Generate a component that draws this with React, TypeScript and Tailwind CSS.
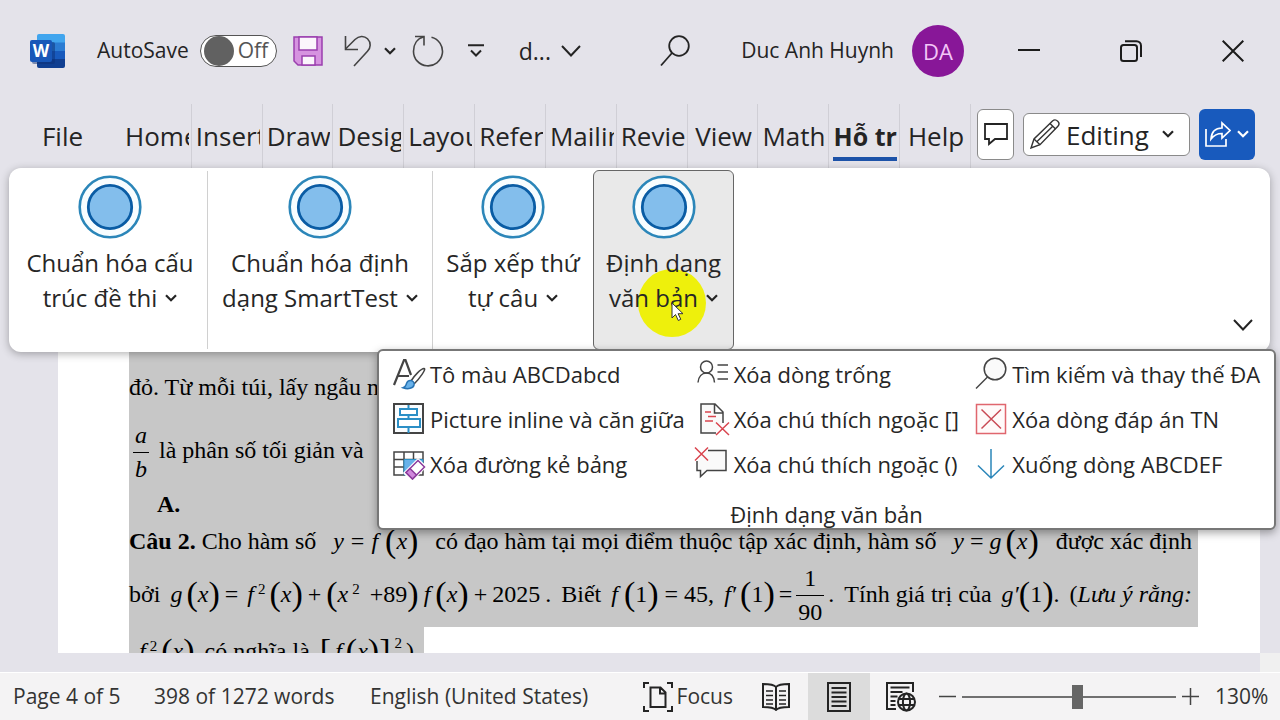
import type { ReactNode } from "react";
import { clsx } from "clsx";

const TABS = [
  { label: "Home" },
  { label: "Insert" },
  { label: "Draw" },
  { label: "Design" },
  { label: "Layout" },
  { label: "Refer" },
  { label: "Mailin" },
  { label: "Revie" },
  { label: "View", fits: true },
  { label: "Math" },
  { label: "Hỗ tr", active: true },
  { label: "Help", fits: true },
];

function Chevron({ className }: { className?: string }) {
  return (
    <svg viewBox="0 0 12 8" className={clsx("h-2 w-3 shrink-0", className)} fill="none" stroke="#242424" strokeWidth="2.2">
      <path d="M1 1.2 6 6.2 11 1.2" />
    </svg>
  );
}

function WideChevron() {
  return (
    <svg viewBox="0 0 20 12" className="h-3 w-5 shrink-0" fill="none" stroke="#242424" strokeWidth="2">
      <path d="M1 1 10 10.5 19 1" />
    </svg>
  );
}

function WordLogo() {
  return (
    <div className="relative h-9 w-9 shrink-0">
      <svg viewBox="0 0 36 36" className="h-9 w-9">
        <path d="M9 1h24a2 2 0 0 1 2 2v7H7V3a2 2 0 0 1 2-2Z" fill="#41a5ee" />
        <path d="M7 9.500h28v9H7Z" fill="#2b7cd3" />
        <path d="M7 18h28v8H7Z" fill="#185abd" />
        <path d="M7 26h28v7a2 2 0 0 1-2 2H9a2 2 0 0 1-2-2Z" fill="#103f91" />
        <rect x="2" y="9" width="23" height="22" rx="2" fill="#0b2f75" opacity=".5" />
        <rect x="0" y="7" width="22" height="22" rx="2" fill="#1857b8" />
      </svg>
      <span className="absolute top-[7px] left-0 w-[22px] text-center text-[17px] leading-[22px] font-bold text-white">W</span>
    </div>
  );
}

function SaveIcon() {
  return (
    <svg viewBox="0 0 30 30" className="h-[30px] w-[30px]" stroke="#9a3fae" strokeWidth="1.500">
      <path d="M1 1h28v28H5l-4-4Z" fill="#d693e0" />
      <path d="M6 1h18v13H6Z" fill="#fbf5fc" />
      <path d="M9 29v-9h13v9Z" fill="#fbf5fc" />
    </svg>
  );
}

function UndoIcon() {
  return (
    <svg viewBox="0 0 28 32" className="h-8 w-7" fill="none" stroke="#444" strokeWidth="1.600">
      <path d="M1.500 1v13.500H14" />
      <path d="M1.500 14 11 4.500C15 .8 20 .4 23.500 3.800c3.800 3.800 3.300 9 0 12.500L10 31" />
    </svg>
  );
}

function RedoIcon() {
  return (
    <svg viewBox="0 0 32 32" className="h-8 w-8" fill="none" stroke="#444" strokeWidth="1.600">
      <path d="M3 1.500h9v9" />
      <path d="M12 1.800C5 3.500 1.500 9.500 1.500 16.300a14.500 14.500 0 1 0 18-14" />
    </svg>
  );
}

function PencilIcon() {
  return (
    <svg viewBox="0 0 30 30" className="h-[30px] w-[30px]" fill="none" stroke="#333" strokeWidth="1.400">
      <path d="M1 29 4 20 22.500 2c2-1.800 4-1 5.200.2 1.400 1.400 1.900 3.300.2 5.100L10 25.700Z" />
      <path d="m4 20 6 5.700M20 4.500l5.600 5.400M6.800 22.800 23 7" />
    </svg>
  );
}

function ShareIcon() {
  return (
    <svg viewBox="0 0 26 28" className="h-7 w-[26px]" fill="none" stroke="#fff" strokeWidth="1.700">
      <path d="M1 9v17h20v-7" />
      <path d="M6 19c.5-7 4-11 11-11V3l8 7.500-8 7.500v-4.500c-5 0-8 1.500-11 5.500Z" />
    </svg>
  );
}

function RingIcon() {
  return (
    <svg viewBox="0 0 64 64" className="h-16 w-16">
      <circle cx="32" cy="32" r="30.300" fill="#f8fdff" stroke="#2b86b9" strokeWidth="2.600" />
      <circle cx="32" cy="32" r="21.700" fill="#83beec" stroke="#0a5ca4" strokeWidth="2.800" />
    </svg>
  );
}

function IconBox({ children }: { children: ReactNode }) {
  return (
    <svg viewBox="0 0 32 32" className="h-8 w-8 shrink-0 overflow-visible" fill="none" stroke="#444" strokeWidth="1.500">
      {children}
    </svg>
  );
}

const MENU: { label: string; icon: ReactNode }[] = [
  {
    label: "Tô màu ABCDabcd",
    icon: (
      <IconBox>
        <path d="M1 27 11 2h1.500L18 17M5 18h11" strokeWidth="2.200" />
        <path d="M18 23C21 18 28 10.500 31 10.500S26 21 21.500 25.500Z" fill="#fff" />
        <path d="M17.500 22.500c2.500.2 4 2 3.500 4.500-.8 3.500-6 4.500-11 2.800 3-1 2.800-2.500 3.600-4.500.7-1.700 2-2.900 3.900-2.800Z" fill="#69b2ea" stroke="#2874b5" />
      </IconBox>
    ),
  },
  {
    label: "Xóa dòng trống",
    icon: (
      <IconBox>
        <circle cx="9.500" cy="9" r="6" />
        <path d="M1 24.500c.5-6 4-9.500 8.500-9.500s7.500 3.500 8 9.500M20.500 7h10.500M20.500 14h10.500M20.500 21h10.500" />
      </IconBox>
    ),
  },
  {
    label: "Tìm kiếm và thay thế ĐA",
    icon: (
      <IconBox>
        <circle cx="20" cy="11" r="10.800" fill="#fafafa" />
        <path d="M12.500 19 1 30.500" />
      </IconBox>
    ),
  },
  {
    label: "Picture inline và căn giữa",
    icon: (
      <IconBox>
        <rect x="1" y="1" width="29" height="29" fill="#fafdff" strokeWidth="2" />
        <path d="M15.500 2v28" stroke="#2b8fc6" strokeWidth="2" />
        <rect x="7" y="6" width="17" height="6" fill="#fff" stroke="#2b8fc6" strokeWidth="2" />
        <rect x="5" y="16" width="22" height="8" fill="#fff" stroke="#2b8fc6" strokeWidth="2" />
      </IconBox>
    ),
  },
  {
    label: "Xóa chú thích ngoặc []",
    icon: (
      <IconBox>
        <path d="M19 30H4V1h14l8 8v11M17.500 1v9H26" fill="#fafafa" />
        <path d="M8 9h6M11 13.500h8M8 18h8M19 19.500 32 32M32 19.500 19 32" stroke="#d9454f" />
      </IconBox>
    ),
  },
  {
    label: "Xóa dòng đáp án TN",
    icon: (
      <IconBox>
        <rect x="1.500" y="1.500" width="29" height="29" fill="#fffafa" stroke="#e0666e" />
        <path d="M6.500 6.500 26 25.500M26 6.500 6.500 25.500" stroke="#c94a55" />
      </IconBox>
    ),
  },
  {
    label: "Xóa đường kẻ bảng",
    icon: (
      <IconBox>
        <path d="M1 4h29v23H1ZM1 11.500h29M1 19h29M11 4v23M20.500 4v23" />
        <path d="M11 11.500h19V19L20 27h-9Z" fill="#69b2ea" stroke="#2b8fc6" strokeWidth="1" />
        <path d="m12 25 13-13 7 6.500L19 32Z" fill="#fff" stroke="#fff" strokeWidth="3" />
        <path d="m13 24.500 12-12 6.500 6.500-12 12Z" fill="#fff" stroke="#8c3b9c" />
        <path d="m13 24.500 4-4 6.500 6.500-4 4Z" fill="#d087dc" stroke="#8c3b9c" />
      </IconBox>
    ),
  },
  {
    label: "Xóa chú thích ngoặc ()",
    icon: (
      <IconBox>
        <path d="M11 2.500h18v20H10l-6.500 6v-6H0V13" fill="#fafafa" />
        <path d="M-2-.5 11 12.500M11-.5-2 12.500" stroke="#d9454f" />
      </IconBox>
    ),
  },
  {
    label: "Xuống dòng ABCDEF",
    icon: (
      <IconBox>
        <path d="M16 1v29M3 17.500 16 30l13-12.500" stroke="#2b86b9" />
      </IconBox>
    ),
  },
];

function RibbonButton({ lines, className, children }: { lines: [string, string]; className?: string; children?: ReactNode }) {
  return (
    <button type="button" className={clsx("relative flex shrink-0 flex-col items-center text-[24px] leading-[35px] text-[#262626]", className)}>
      <RingIcon />
      {children}
      <span className="relative mt-1.5 whitespace-nowrap">{lines[0]}</span>
      <span className="relative flex items-center gap-2 whitespace-nowrap">
        {lines[1]}
        <Chevron />
      </span>
    </button>
  );
}

/** Tall bracket around a math expression. */
function Tall({ children }: { children: string }) {
  return <span className="text-[34px] leading-none">{children}</span>;
}

function Paren({ children }: { children: ReactNode }) {
  return (
    <span className="flex items-center">
      <Tall>(</Tall>
      {children}
      <Tall>)</Tall>
    </span>
  );
}

function Sup({ children }: { children: string }) {
  return <sup className="-top-2 mx-1 text-[15px] leading-none not-italic">{children}</sup>;
}

function Fraction({ top, bottom }: { top: ReactNode; bottom: ReactNode }) {
  return (
    <span className="flex flex-col items-center pt-1 text-center leading-[33px]">
      <span>{top}</span>
      <span className="h-px w-full bg-black" />
      <span className="px-0.5">{bottom}</span>
    </span>
  );
}

function TitleBar() {
  return (
    <header className="flex h-26 items-center pr-9 pb-0.5 pl-[30px] text-[21px] text-[#242424]">
      <WordLogo />
      <label className="ml-[31px] flex items-center gap-[11px]">
        AutoSave
        <input type="checkbox" className="peer sr-only" />
        <span className="flex h-8 w-[77px] items-center gap-1 rounded-full border border-[#555] bg-white pl-[3px] text-[#555]">
          <span className="h-[30px] w-[30px] rounded-full bg-[#616161]" />
          Off
        </span>
      </label>
      <button type="button" aria-label="Save" className="ml-4">
        <SaveIcon />
      </button>
      <button type="button" aria-label="Undo" className="ml-[21px]">
        <UndoIcon />
      </button>
      <button type="button" aria-label="Undo history" className="ml-3">
        <Chevron />
      </button>
      <button type="button" aria-label="Redo" className="ml-4">
        <RedoIcon />
      </button>
      <button type="button" aria-label="Customize toolbar" className="ml-6">
        <svg viewBox="0 0 16 14" className="h-3.5 w-4" fill="none" stroke="#242424" strokeWidth="2">
          <path d="M0 1.200h16M3 6.500 8 11.500 13 6.500" />
        </svg>
      </button>
      <button type="button" className="ml-[35px] flex items-center gap-2.5 text-[23px]">
        d...
        <WideChevron />
      </button>
      <button type="button" aria-label="Search" className="ml-auto">
        <svg viewBox="0 0 30 32" className="h-8 w-[30px]" fill="none" stroke="#242424" strokeWidth="1.800">
          <circle cx="19" cy="11" r="9.800" />
          <path d="M12 18 1 30.500" />
        </svg>
      </button>
      <button type="button" className="ml-[51px] flex items-center gap-[18px]">
        Duc Anh Huynh
        <span className="flex h-[52px] w-[52px] items-center justify-center rounded-full bg-[#881798] text-[22px] text-[#f3c6f7]">DA</span>
      </button>
      <button type="button" aria-label="Minimize" className="ml-[54px]">
        <svg viewBox="0 0 22 22" className="h-[22px] w-[22px]" stroke="#1c1c1c" strokeWidth="2">
          <path d="M0 10h22" />
        </svg>
      </button>
      <button type="button" aria-label="Restore" className="ml-20">
        <svg viewBox="0 0 22 22" className="h-[22px] w-[22px]" fill="none" stroke="#1c1c1c" strokeWidth="2">
          <rect x="1" y="5" width="16" height="16" rx="2.500" />
          <path d="M5 1.200h11.500A4.500 4.500 0 0 1 21 5.700V17" />
        </svg>
      </button>
      <button type="button" aria-label="Close" className="ml-20">
        <svg viewBox="0 0 22 22" className="h-[22px] w-[22px]" stroke="#1c1c1c" strokeWidth="2">
          <path d="m.7.700 20.600 20.600M21.300.700.700 21.300" />
        </svg>
      </button>
    </header>
  );
}

function TabBar() {
  return (
    <nav className="flex h-16 text-[26px] text-[#242424]">
      <button type="button" className="w-[121px] shrink-0 pl-1">
        File
      </button>
      <div className="flex min-w-0 flex-1">
        {TABS.map((tab) => (
          <button
            key={tab.label}
            type="button"
            className={clsx("flex min-w-0 flex-1 basis-0 items-center border-r border-[#d0cfd6] pr-0.5 pl-1", tab.fits && "justify-center")}
          >
            <span
              className={clsx(
                "overflow-hidden border-b-4 pt-1 leading-[42px] whitespace-nowrap",
                tab.active ? "w-full border-[#1c52a8] text-[25px] font-bold" : "border-transparent"
              )}
            >
              {tab.label}
            </span>
          </button>
        ))}
      </div>
      <div className="mr-[25px] ml-1.5 flex shrink-0 items-center gap-[9px] pb-1">
        <button type="button" aria-label="Comments" className="flex h-[51px] w-[37px] items-center justify-center rounded-md border border-[#8a8a8a] bg-white">
          <svg viewBox="0 0 24 24" className="h-6 w-6" fill="none" stroke="#242424" strokeWidth="1.800">
            <path d="M1 2h22v15H11l-6 5v-5H1Z" />
          </svg>
        </button>
        <label className="relative flex h-[43px] items-center rounded-md border border-[#8a8a8a] bg-white pl-1.5">
          <PencilIcon />
          <select aria-label="Mode" className="w-[129px] appearance-none bg-transparent pt-0.5 pl-1.5">
            <option>Editing</option>
          </select>
          <Chevron className="pointer-events-none absolute right-[15px]" />
        </label>
        <button type="button" aria-label="Share" className="flex h-[51px] w-14 items-center justify-center gap-1.5 rounded-md bg-[#185abd]">
          <ShareIcon />
          <svg viewBox="0 0 12 8" className="h-2 w-3" fill="none" stroke="#fff" strokeWidth="2.200">
            <path d="M1 1.200 6 6.200 11 1.200" />
          </svg>
        </button>
      </div>
    </nav>
  );
}

function Ribbon() {
  return (
    <section className="relative z-10 mr-2.5 ml-[9px] flex h-46 rounded-xl bg-white py-[3px] shadow-[0_2px_8px_rgba(0,0,0,0.3)]">
      <RibbonButton lines={["Chuẩn hóa cấu", "trúc đề thi"]} className="w-[199px] border-r border-[#d0d0d0] pt-1 pl-1" />
      <RibbonButton lines={["Chuẩn hóa định", "dạng SmartTest"]} className="w-[225px] border-r border-[#d0d0d0] pt-1" />
      <RibbonButton lines={["Sắp xếp thứ", "tự câu"]} className="w-40 pt-1" />
      <RibbonButton lines={["Định dạng", "văn bản"]} className="-my-px w-[141px] rounded-md border border-[#666] bg-[#e9e9e9] pt-1">
        <span className="absolute top-[98px] left-11 h-[68px] w-[68px] rounded-full bg-[#eef00c]" />
        <svg viewBox="0 0 14 20" className="absolute top-[131px] left-[77px] z-10 h-5 w-3.5">
          <path d="M1 1v15l3.500-3.500 2.800 6 2.500-1.200-2.700-5.600H12Z" fill="#fff" stroke="#333" strokeWidth="1" />
        </svg>
      </RibbonButton>
      <button type="button" aria-label="Ribbon display options" className="mr-[17px] mb-[18px] ml-auto self-end">
        <WideChevron />
      </button>

      <div role="menu" className="absolute top-[181px] -right-1.5 left-92 flex h-[181px] flex-col rounded-md border-2 border-[#777] bg-white text-[22px] text-[#262626] shadow-[0_3px_8px_rgba(0,0,0,0.35)]">
        <div className="grid grid-cols-[304fr_279fr_299fr] gap-y-[13px] pt-[7px] pl-3.5">
          {MENU.map((item) => (
            <button key={item.label} type="button" role="menuitem" className="flex items-center gap-[5px] leading-8 whitespace-nowrap">
              {item.icon}
              {item.label}
            </button>
          ))}
        </div>
        <p className="mt-auto pb-0.5 text-center leading-6">Định dạng văn bản</p>
      </div>
    </section>
  );
}

function DocumentArea() {
  return (
    <main className="h-[301px] overflow-hidden pr-5 pl-[58px] font-['Liberation_Serif',serif] text-[24px] leading-6 text-black">
      <div className="h-full bg-white pr-[62px] pl-[71px]">
        <div className="bg-[#c7c7c7] whitespace-nowrap">
          <p className="flex h-[70px] items-center">đỏ. Từ mỗi túi, lấy ngẫu nhiên</p>
          <div className="flex h-14 items-center gap-2.5 pl-1">
            <Fraction top={<i>a</i>} bottom={<i>b</i>} />
            <span>là phân số tối giản và</span>
          </div>
          <p className="flex h-[52px] items-center pl-7 font-bold">A.</p>
          <div className="flex h-[22px] items-center justify-between pr-1.5">
            <span>
              <b>Câu 2.</b> Cho hàm số
            </span>
            <span className="flex items-center gap-[7px]">
              <i>y</i>
              <span>=</span>
              <i>f</i>
              <Paren>
                <i>x</i>
              </Paren>
            </span>
            <span>có đạo hàm tại mọi điểm thuộc tập xác định, hàm số</span>
            <span className="flex items-center gap-1.5">
              <i>y</i>
              <span>=</span>
              <span className="flex items-center gap-1">
                <i>g</i>
                <Paren>
                  <i>x</i>
                </Paren>
              </span>
            </span>
            <span>được xác định</span>
          </div>
          <div className="flex h-[75px] items-center justify-between pt-2 pr-1.5">
            <span>bởi</span>
            <span className="flex items-center gap-[5px]">
              <span className="flex items-center gap-1">
                <i>g</i>
                <Paren>
                  <i>x</i>
                </Paren>
              </span>
              <span>=</span>
              <span className="flex items-center">
                <i className="ml-1">
                  f<Sup>2</Sup>
                </i>
                <Paren>
                  <i>x</i>
                </Paren>
              </span>
              <span>+</span>
              <Paren>
                <span>
                  <i>x</i>
                  <Sup>2</Sup> +89
                </span>
              </Paren>
              <i>f</i>
              <Paren>
                <i>x</i>
              </Paren>
              <span>+</span>
              <span>2025</span>
              <span>.</span>
            </span>
            <span>Biết</span>
            <span className="flex items-center gap-1.5">
              <i>f</i>
              <Paren>1</Paren>
              <span>= 45,</span>
            </span>
            <span className="flex items-center gap-1">
              <i>f′</i>
              <Paren>1</Paren>
              <span>=</span>
              <Fraction top="1" bottom="90" />
              <span>.</span>
            </span>
            <span>Tính giá trị của</span>
            <span className="flex items-center">
              <i>g′</i>
              <Paren>1</Paren>
              <span>.</span>
            </span>
            <span>
              (<i>Lưu ý rằng:</i>
            </span>
          </div>
        </div>
        <div className="flex h-12 w-[295px] items-center justify-between bg-[#c7c7c7] pr-2.5 pl-2.5 whitespace-nowrap">
          <span className="flex items-center">
            <i>
              f<Sup>2</Sup>
            </i>
            <Paren>
              <i>x</i>
            </Paren>
          </span>
          <span>có nghĩa là</span>
          <span className="flex items-center">
            <Tall>[</Tall>
            <i className="mx-1">f</i>
            <Paren>
              <i>x</i>
            </Paren>
            <Tall>]</Tall>
            <Sup>2</Sup>
            <span>)</span>
          </span>
        </div>
      </div>
    </main>
  );
}

function StatusBar() {
  return (
    <footer className="flex h-12 items-center border-t border-white bg-[#f4f3f4] pr-3 pl-[13px] text-[21px] whitespace-nowrap text-[#333]">
      <span className="w-[141px]">Page 4 of 5</span>
      <span className="w-[216px]">398 of 1272 words</span>
      <span>English (United States)</span>
      <button type="button" className="ml-auto flex items-center gap-1">
        <svg viewBox="0 0 30 30" className="h-[30px] w-[30px]" fill="none" stroke="#242424" strokeWidth="2">
          <path d="M6 1H1v5M24 1h5v5M1 24v5h5M29 24v5h-5M7.500 5.500h10l5 5v14.500h-15ZM17 5.500v6h5.500" />
        </svg>
        Focus
      </button>
      <button type="button" aria-label="Read mode" className="ml-[29px]">
        <svg viewBox="0 0 28 28" className="h-7 w-7" fill="none" stroke="#242424" strokeWidth="2">
          <path d="M14 4C12 1.500 9 1 1 1v23c8 0 11 .500 13 3 2-2.500 5-3 13-3V1C19 1 16 1.500 14 4Zm0 0v22" />
          <path d="M4 8h7M4 12.500h7M4 17h7M4 21h7M17 8h7M17 12.500h7M17 17h7M17 21h7" strokeWidth="1.700" />
        </svg>
      </button>
      <button type="button" aria-label="Print layout" className="ml-[18px] flex h-full w-[62px] items-center justify-center bg-[#dcdcdc]">
        <svg viewBox="0 0 24 30" className="h-[30px] w-6" fill="none" stroke="#242424" strokeWidth="2">
          <path d="M1 1h22v28H1Z" />
          <path d="M4.500 6h15M4.500 10.500h15M4.500 15h15M4.500 19.500h15M4.500 24h15" />
        </svg>
      </button>
      <button type="button" aria-label="Web layout" className="ml-4">
        <svg viewBox="0 0 30 30" className="h-[30px] w-[30px]" fill="none" stroke="#242424" strokeWidth="2">
          <path d="M10 27H1V1h26v9" />
          <path d="M4.500 5.500h19M4.500 10h12M4.500 14.500h7M4.500 19h5M4.500 23h5" strokeWidth="1.800" />
          <circle cx="20.500" cy="20" r="8.500" />
          <ellipse cx="20.500" cy="20" rx="3.600" ry="8.500" />
          <path d="M12.500 17h16M12.500 23h16" />
        </svg>
      </button>
      <button type="button" aria-label="Zoom out" className="ml-[23px]">
        <svg viewBox="0 0 17 17" className="h-[17px] w-[17px]" stroke="#444" strokeWidth="1.500">
          <path d="M0 8.500h17" />
        </svg>
      </button>
      <input
        type="range"
        aria-label="Zoom"
        defaultValue={54}
        className="mx-1.5 h-6 w-[214px] appearance-none bg-transparent [&::-webkit-slider-runnable-track]:h-0.5 [&::-webkit-slider-runnable-track]:bg-[#707070] [&::-webkit-slider-thumb]:-mt-[11px] [&::-webkit-slider-thumb]:h-6 [&::-webkit-slider-thumb]:w-[11px] [&::-webkit-slider-thumb]:appearance-none [&::-webkit-slider-thumb]:bg-[#666]"
      />
      <button type="button" aria-label="Zoom in">
        <svg viewBox="0 0 17 17" className="h-[17px] w-[17px]" stroke="#444" strokeWidth="1.500">
          <path d="M0 8.500h17M8.500 0v17" />
        </svg>
      </button>
      <span className="ml-4 w-[53px]">130%</span>
    </footer>
  );
}

export default function App() {
  return (
    <div className="flex min-h-screen flex-col bg-[#e4e3ea] font-['Open_Sans','Noto_Sans',sans-serif]">
      <TitleBar />
      <TabBar />
      <Ribbon />
      <DocumentArea />
      <div className="flex flex-1 justify-end">
        <span className="w-5 bg-[#f0f0f0]" />
      </div>
      <StatusBar />
    </div>
  );
}
